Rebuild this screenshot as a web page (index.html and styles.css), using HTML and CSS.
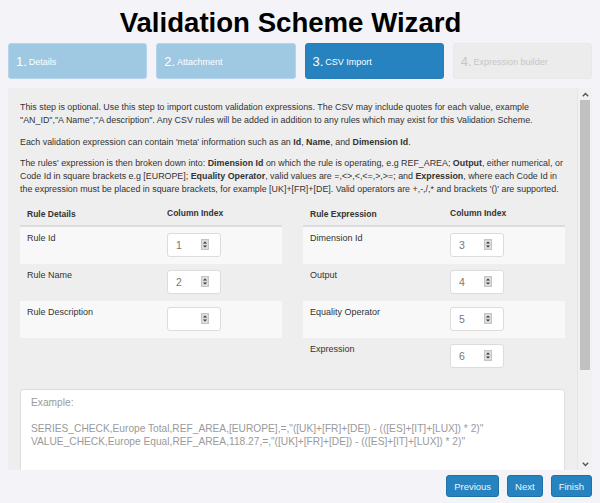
FILE: index.html
```html
<!DOCTYPE html>
<html>
<head>
<meta charset="utf-8">
<link rel="stylesheet" href="styles.css">
</head>
<body>
<div class="wizard">
  <h1 class="title">Validation Scheme Wizard</h1>
  <div class="steps">
    <div class="step done"><span class="num">1.</span><span class="lbl">Details</span></div>
    <div class="step done"><span class="num">2.</span><span class="lbl">Attachment</span></div>
    <div class="step active"><span class="num">3.</span><span class="lbl">CSV Import</span></div>
    <div class="step todo"><span class="num">4.</span><span class="lbl">Expression builder</span></div>
  </div>

  <div class="panel">
    <div class="panel-body">
      <div class="intro">
        <p>This step is optional. Use this step to import custom validation expressions. The CSV may include quotes for each value, example "AN_ID","A Name","A description". Any CSV rules will be added in addition to any rules which may exist for this Validation Scheme.</p>
        <p>Each validation expression can contain 'meta' information such as an <b>Id</b>, <b>Name</b>, and <b>Dimension Id</b>.</p>
        <p>The rules' expression is then broken down into: <b>Dimension Id</b> on which the rule is operating, e.g REF_AREA; <b>Output</b>, either numerical, or Code Id in square brackets e.g [EUROPE]; <b>Equality Operator</b>, valid values are =,&lt;&gt;,&lt;,&lt;=,&gt;,&gt;=; and <b>Expression</b>, where each Code Id in the expression must be placed in square brackets, for example [UK]+[FR]+[DE]. Valid operators are +,-,/,* and brackets '()' are supported.</p>
      </div>

      <div class="tables">
        <div class="rtable">
          <div class="rrow head"><div class="c1">Rule Details</div><div class="c2">Column Index</div></div>
          <div class="rrow odd"><div class="c1">Rule Id</div><div class="c2"><div class="spin"><span class="val">1</span><svg class="arr" width="8" height="11" viewBox="0 0 8 11"><rect x="0" y="0" width="8" height="11" fill="#dcdcdc"/><rect x="0.5" y="0.5" width="7" height="10" fill="none" stroke="#c4c4c4"/><path d="M2 4.5 L4 2.5 L6 4.5 Z M2 6.5 L4 8.5 L6 6.5 Z" fill="#333"/></svg></div></div></div>
          <div class="rrow"><div class="c1">Rule Name</div><div class="c2"><div class="spin"><span class="val">2</span><svg class="arr" width="8" height="11" viewBox="0 0 8 11"><rect x="0" y="0" width="8" height="11" fill="#dcdcdc"/><rect x="0.5" y="0.5" width="7" height="10" fill="none" stroke="#c4c4c4"/><path d="M2 4.5 L4 2.5 L6 4.5 Z M2 6.5 L4 8.5 L6 6.5 Z" fill="#333"/></svg></div></div></div>
          <div class="rrow odd"><div class="c1">Rule Description</div><div class="c2"><div class="spin"><span class="val"></span><svg class="arr" width="8" height="11" viewBox="0 0 8 11"><rect x="0" y="0" width="8" height="11" fill="#dcdcdc"/><rect x="0.5" y="0.5" width="7" height="10" fill="none" stroke="#c4c4c4"/><path d="M2 4.5 L4 2.5 L6 4.5 Z M2 6.5 L4 8.5 L6 6.5 Z" fill="#333"/></svg></div></div></div>
        </div>
        <div class="rtable">
          <div class="rrow head"><div class="c1">Rule Expression</div><div class="c2">Column Index</div></div>
          <div class="rrow odd"><div class="c1">Dimension Id</div><div class="c2"><div class="spin"><span class="val">3</span><svg class="arr" width="8" height="11" viewBox="0 0 8 11"><rect x="0" y="0" width="8" height="11" fill="#dcdcdc"/><rect x="0.5" y="0.5" width="7" height="10" fill="none" stroke="#c4c4c4"/><path d="M2 4.5 L4 2.5 L6 4.5 Z M2 6.5 L4 8.5 L6 6.5 Z" fill="#333"/></svg></div></div></div>
          <div class="rrow"><div class="c1">Output</div><div class="c2"><div class="spin"><span class="val">4</span><svg class="arr" width="8" height="11" viewBox="0 0 8 11"><rect x="0" y="0" width="8" height="11" fill="#dcdcdc"/><rect x="0.5" y="0.5" width="7" height="10" fill="none" stroke="#c4c4c4"/><path d="M2 4.5 L4 2.5 L6 4.5 Z M2 6.5 L4 8.5 L6 6.5 Z" fill="#333"/></svg></div></div></div>
          <div class="rrow odd"><div class="c1">Equality Operator</div><div class="c2"><div class="spin"><span class="val">5</span><svg class="arr" width="8" height="11" viewBox="0 0 8 11"><rect x="0" y="0" width="8" height="11" fill="#dcdcdc"/><rect x="0.5" y="0.5" width="7" height="10" fill="none" stroke="#c4c4c4"/><path d="M2 4.5 L4 2.5 L6 4.5 Z M2 6.5 L4 8.5 L6 6.5 Z" fill="#333"/></svg></div></div></div>
          <div class="rrow"><div class="c1">Expression</div><div class="c2"><div class="spin"><span class="val">6</span><svg class="arr" width="8" height="11" viewBox="0 0 8 11"><rect x="0" y="0" width="8" height="11" fill="#dcdcdc"/><rect x="0.5" y="0.5" width="7" height="10" fill="none" stroke="#c4c4c4"/><path d="M2 4.5 L4 2.5 L6 4.5 Z M2 6.5 L4 8.5 L6 6.5 Z" fill="#333"/></svg></div></div></div>
        </div>
      </div>

      <div class="example">Example:<br><br>SERIES_CHECK,Europe Total,REF_AREA,[EUROPE],=,"([UK]+[FR]+[DE]) - (([ES]+[IT]+[LUX]) * 2)"<br>VALUE_CHECK,Europe Equal,REF_AREA,118.27,=,"([UK]+[FR]+[DE]) - (([ES]+[IT]+[LUX]) * 2)"</div>
    </div>
    <div class="scrollbar">
      <div class="sb-btn"><svg width="7" height="5" viewBox="0 0 7 5"><path d="M0.8 4.2 L3.5 1.5 L6.2 4.2" fill="none" stroke="#555" stroke-width="1.4"/></svg></div>
      <div class="sb-track"><div class="sb-thumb"></div></div>
      <div class="sb-btn"><svg width="7" height="5" viewBox="0 0 7 5"><path d="M0.8 0.8 L3.5 3.5 L6.2 0.8" fill="none" stroke="#555" stroke-width="1.4"/></svg></div>
    </div>
  </div>

  <div class="actions">
    <button class="btn">Previous</button>
    <button class="btn">Next</button>
    <button class="btn">Finish</button>
  </div>
</div>
</body>
</html>
```

FILE: styles.css
```css
html, body {
  margin: 0;
  padding: 0;
}
body {
  background: #f4f4f8;
  font-family: "Liberation Sans", Arial, sans-serif;
  color: #333;
}
.wizard {
  padding: 0 8px;
}
.title {
  margin: 0;
  padding-top: 7px;
  padding-right: 19px;
  font-size: 27.6px;
  line-height: 31px;
  font-weight: bold;
  text-align: center;
  color: #000;
}
.steps {
  margin-top: 5px;
  display: grid;
  grid-template-columns: repeat(4, 1fr);
  gap: 9px;
}
.step {
  height: 36px;
  box-sizing: border-box;
  border-radius: 3px;
  padding-left: 7px;
  display: flex;
  align-items: center;
  color: #fff;
}
.step .num {
  font-size: 13px;
  margin-right: 2px;
}
.step .lbl {
  font-size: 9px;
  padding-top: 2px;
}
.step.done {
  background: #9fc8e2;
  border: 1px solid #b3d4ea;
}
.step.active {
  background: #2683c0;
  border: 1px solid #2a7db5;
}
.step.todo {
  background: #ececec;
  border: 1px solid #e8e8e8;
  color: #c6c6c6;
}
.panel {
  margin-top: 9px;
  height: 382px;
  display: flex;
  background: #eeeeee;
}
.panel-body {
  flex: 1;
  overflow: hidden;
  padding: 13px 12px 0 12px;
}
.intro {
  margin-right: -6px;
}
.intro p {
  margin: 0 0 9px;
  font-size: 8.9px;
  line-height: 12.8px;
  color: #333;
}
.intro p:last-child {
  margin-bottom: 4px;
}
.intro b {
  font-weight: bold;
}
.tables {
  display: flex;
  justify-content: space-between;
}
.rtable {
  width: 262px;
}
.rrow {
  display: grid;
  grid-template-columns: 147px 1fr;
  height: 37px;
  box-sizing: border-box;
  font-size: 9px;
  color: #333;
}
.rrow.odd {
  background: #f8f8f8;
}
.rrow .c1 {
  padding: 5px 0 0 7px;
  line-height: 13px;
}
.rrow .c2 {
  padding-top: 6px;
}
.rrow.head {
  height: 27px;
  font-size: 8.5px;
  font-weight: bold;
  border-bottom: 2px solid #dddddd;
}
.rrow.head .c1,
.rrow.head .c2 {
  padding-top: 8px;
}
.spin {
  width: 54px;
  height: 24px;
  box-sizing: border-box;
  border: 1px solid #dcdcdc;
  border-radius: 3px;
  background: #fff;
  display: flex;
  align-items: center;
  padding-left: 8px;
}
.spin .val {
  width: 25px;
  font-size: 10.5px;
  color: #777;
}
.spin .arr {
  display: block;
}
.example {
  margin-top: 14px;
  height: 120px;
  box-sizing: border-box;
  background: #fff;
  border: 1px solid #dddddd;
  border-radius: 3px;
  padding: 6px 10px;
  font-size: 10.2px;
  line-height: 13px;
  color: #9a9a9a;
  white-space: nowrap;
}
.scrollbar {
  width: 15px;
  flex: none;
  background: #f1f1f1;
  border-left: 1px solid #e6e6e6;
  box-sizing: border-box;
  display: flex;
  flex-direction: column;
}
.sb-btn {
  height: 12px;
  display: flex;
  align-items: center;
  justify-content: center;
}
.sb-track {
  flex: 1;
  padding: 0 2px;
}
.sb-thumb {
  height: 270px;
  background: #c1c1c1;
}
.actions {
  margin-top: 5px;
  display: flex;
  justify-content: flex-end;
  gap: 8px;
}
.btn {
  height: 22px;
  padding: 0 7px;
  font-family: "Liberation Sans", Arial, sans-serif;
  font-size: 9.5px;
  color: #eef5fb;
  background: #2683c0;
  border: 1px solid #1f70a8;
  border-radius: 3px;
}
```
